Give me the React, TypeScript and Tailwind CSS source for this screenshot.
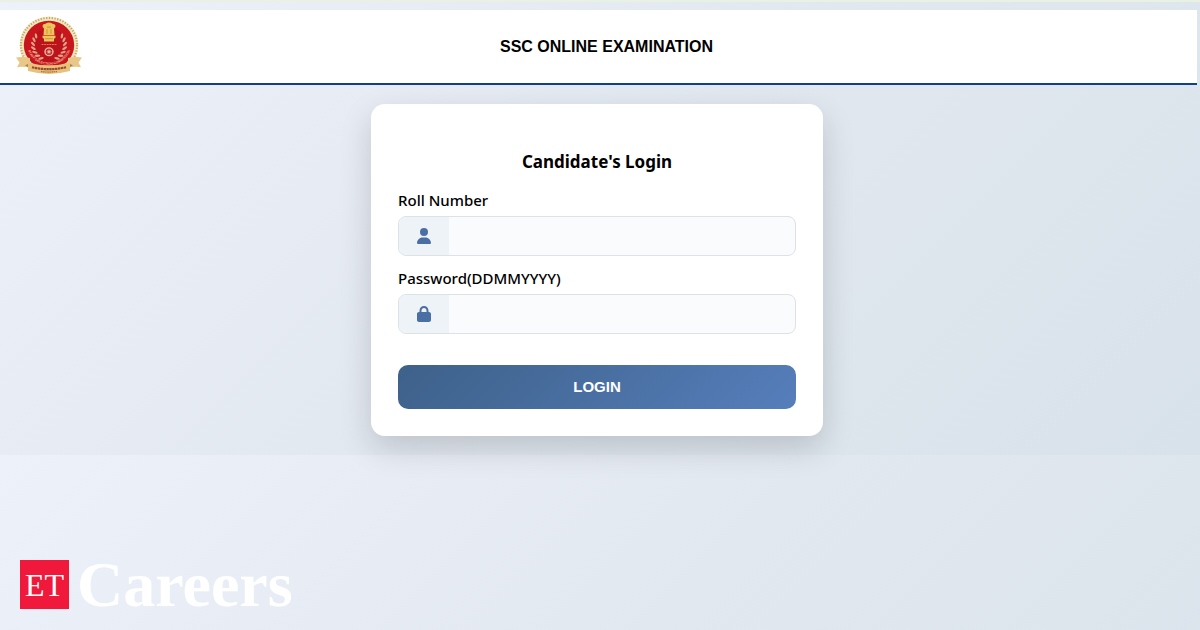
import React, { useState } from "react";
import { FaLock, FaUser } from "react-icons/fa6";

const leaves = [-60, -40, -20, 0, 20, 40, 60];

const Emblem = () => (
  <svg viewBox="0 0 66 60" preserveAspectRatio="none" className="mb-1 h-[58px] w-[66px]" role="img" aria-label="SSC emblem">
    <circle cx="33" cy="30" r="29.5" fill="#f6eac4" />
    <circle cx="33" cy="30" r="28" fill="none" stroke="#c2a768" strokeWidth="2.2" strokeDasharray="1.3 1.5" />
    <circle cx="33" cy="30" r="26" fill="#f6e7b5" />
    <circle cx="33" cy="30" r="25.2" fill="#c8161e" />
    <circle cx="33" cy="30" r="17.5" fill="#bb131c" />
    <defs>
      <path id="ring" d="M10.500 28 A22.500 22.500 0 0 0 55.500 28" />
    </defs>
    <text fontSize="3.4" fontFamily="Liberation Sans, sans-serif" fontWeight="700" fill="#eeb59a">
      <textPath href="#ring" startOffset="50%" textAnchor="middle">
        STAFF SELECTION COMMISSION
      </textPath>
    </text>
    {leaves.map((a) => (
      <g key={a} fill="#e5a184">
        <ellipse cx="17" cy="30" rx="2.8" ry="1.2" transform={`rotate(${-a * 0.8 - 12} 33 30) rotate(45 17 30)`} />
        <ellipse cx="49" cy="30" rx="2.8" ry="1.2" transform={`rotate(${a * 0.8 + 12} 33 30) rotate(-45 49 30)`} />
      </g>
    ))}
    <g fill="#f0c45c">
      <path d="M29.5 8q3.5-2.500 7 0l2 .5q1.500 1.200.8 3l-1.300 1.500.5 7h-11l.5-7-1.300-1.500q-.7-1.800.8-3z" />
      <path d="M26.500 20.500h13v2l-1.500 1v3h-10v-3l-1.500-1z" />
    </g>
    <path d="M31 11.500h4M31 13.500v5M35 13.500v5M29 23.500h8" stroke="#c08c30" strokeWidth=".8" fill="none" />
    <path d="M25.500 29.500h15" stroke="#e5794f" strokeWidth="1" strokeDasharray="2 .6" />
    <circle cx="33" cy="37" r="4" fill="none" stroke="#efb79f" strokeWidth="1.400" />
    <circle cx="33" cy="37" r="1.600" fill="#efb79f" />
    <path d="M33 33v8M29 37h8M30.200 34.200l5.600 5.600M35.800 34.200l-5.600 5.600" stroke="#efb79f" strokeWidth=".5" />
    <path d="M0 43q6-1.500 14 .5v10Q7 52 1 53l2.500-5z" fill="#e8c788" />
    <path d="M66 43q-6-1.500-14 .5v10q7-1.500 13-.5l-2.500-5z" fill="#e8c788" />
    <path d="M9 51l5-2v5zM57 51l-5-2v5z" fill="#a98245" />
    <path d="M12 48q21 6 42 0v9q-21 6-42 0z" fill="#e6c27c" />
    <path d="M16 53q17 4 34 0" fill="none" stroke="#96492b" strokeWidth="2.200" strokeDasharray="2.400 .5" />
    <path d="M25 57.500q8 1 16 0" fill="none" stroke="#a5693d" strokeWidth="1.200" strokeDasharray="1.500 .6" />
  </svg>
);

type FieldProps = {
  id: string;
  label: string;
  type: string;
  icon: React.ReactNode;
  value: string;
  onChange: (value: string) => void;
};

const Field = ({ id, label, type, icon, value, onChange }: FieldProps) => (
  <div>
    <label htmlFor={id} className="block text-[15px] leading-5 font-medium text-black">
      {label}
    </label>
    <div className="mt-[6px] flex h-10 overflow-hidden rounded-lg border border-[#dce2e7] bg-[#f9fbfd]">
      <span className="flex w-[50px] shrink-0 items-center justify-center bg-[#eef3f8] text-base text-[#4a6fa5]">
        {icon}
      </span>
      <input
        id={id}
        type={type}
        value={value}
        onChange={(e) => onChange(e.target.value)}
        className="min-w-0 flex-1 bg-transparent px-3 text-base outline-none"
      />
    </div>
  </div>
);

const App = () => {
  const [roll, setRoll] = useState("");
  const [password, setPassword] = useState("");

  return (
    <div className="flex min-h-screen flex-col bg-[linear-gradient(135deg,#edf1fa,#e2e8f0_50%,#d8e2ea)] bg-[length:100%_455px] font-['Noto_Sans','Open_Sans',sans-serif]">
      <div className="h-[2px] bg-[#e9f1e4]" />
      <header className="mt-2 mr-[3px] flex h-[75px] items-center border-b-2 border-[#123f8c] bg-white px-4">
        <Emblem />
        <h1 className="flex-1 pr-[50px] text-center font-['Liberation_Sans',Arial,sans-serif] text-base font-bold text-black">
          SSC ONLINE EXAMINATION
        </h1>
      </header>

      <main className="flex justify-center pt-[19px] pr-[6px]">
        <form
          onSubmit={(e) => e.preventDefault()}
          className="flex w-full max-w-[452px] flex-col rounded-[14px] bg-white px-[27px] pt-[46px] pb-[27px] shadow-[0_12px_32px_rgba(0,0,0,0.16)]"
        >
          <h2 className="text-center text-[17px] leading-6 font-bold text-black">Candidate's Login</h2>
          <div className="mt-4 flex flex-col gap-3">
            <Field id="roll" label="Roll Number" type="text" icon={<FaUser />} value={roll} onChange={setRoll} />
            <Field
              id="password"
              label="Password(DDMMYYYY)"
              type="password"
              icon={<FaLock />}
              value={password}
              onChange={setPassword}
            />
          </div>
          <button
            type="submit"
            className="mt-[31px] h-11 rounded-[10px] bg-[linear-gradient(135deg,#3d6189,#567ebb)] font-['Liberation_Sans',Arial,sans-serif] text-[15px] font-bold text-white"
          >
            LOGIN
          </button>
        </form>
      </main>

      <footer className="mt-auto flex items-center gap-2 px-5 pb-[21px] font-['Liberation_Serif','Times_New_Roman',serif] text-white">
        <span className="flex size-[49px] items-center justify-center bg-[#f0193c] text-[32px] leading-none">ET</span>
        <span className="text-[64px] leading-[49px] font-bold">Careers</span>
      </footer>
    </div>
  );
};

export default App;
